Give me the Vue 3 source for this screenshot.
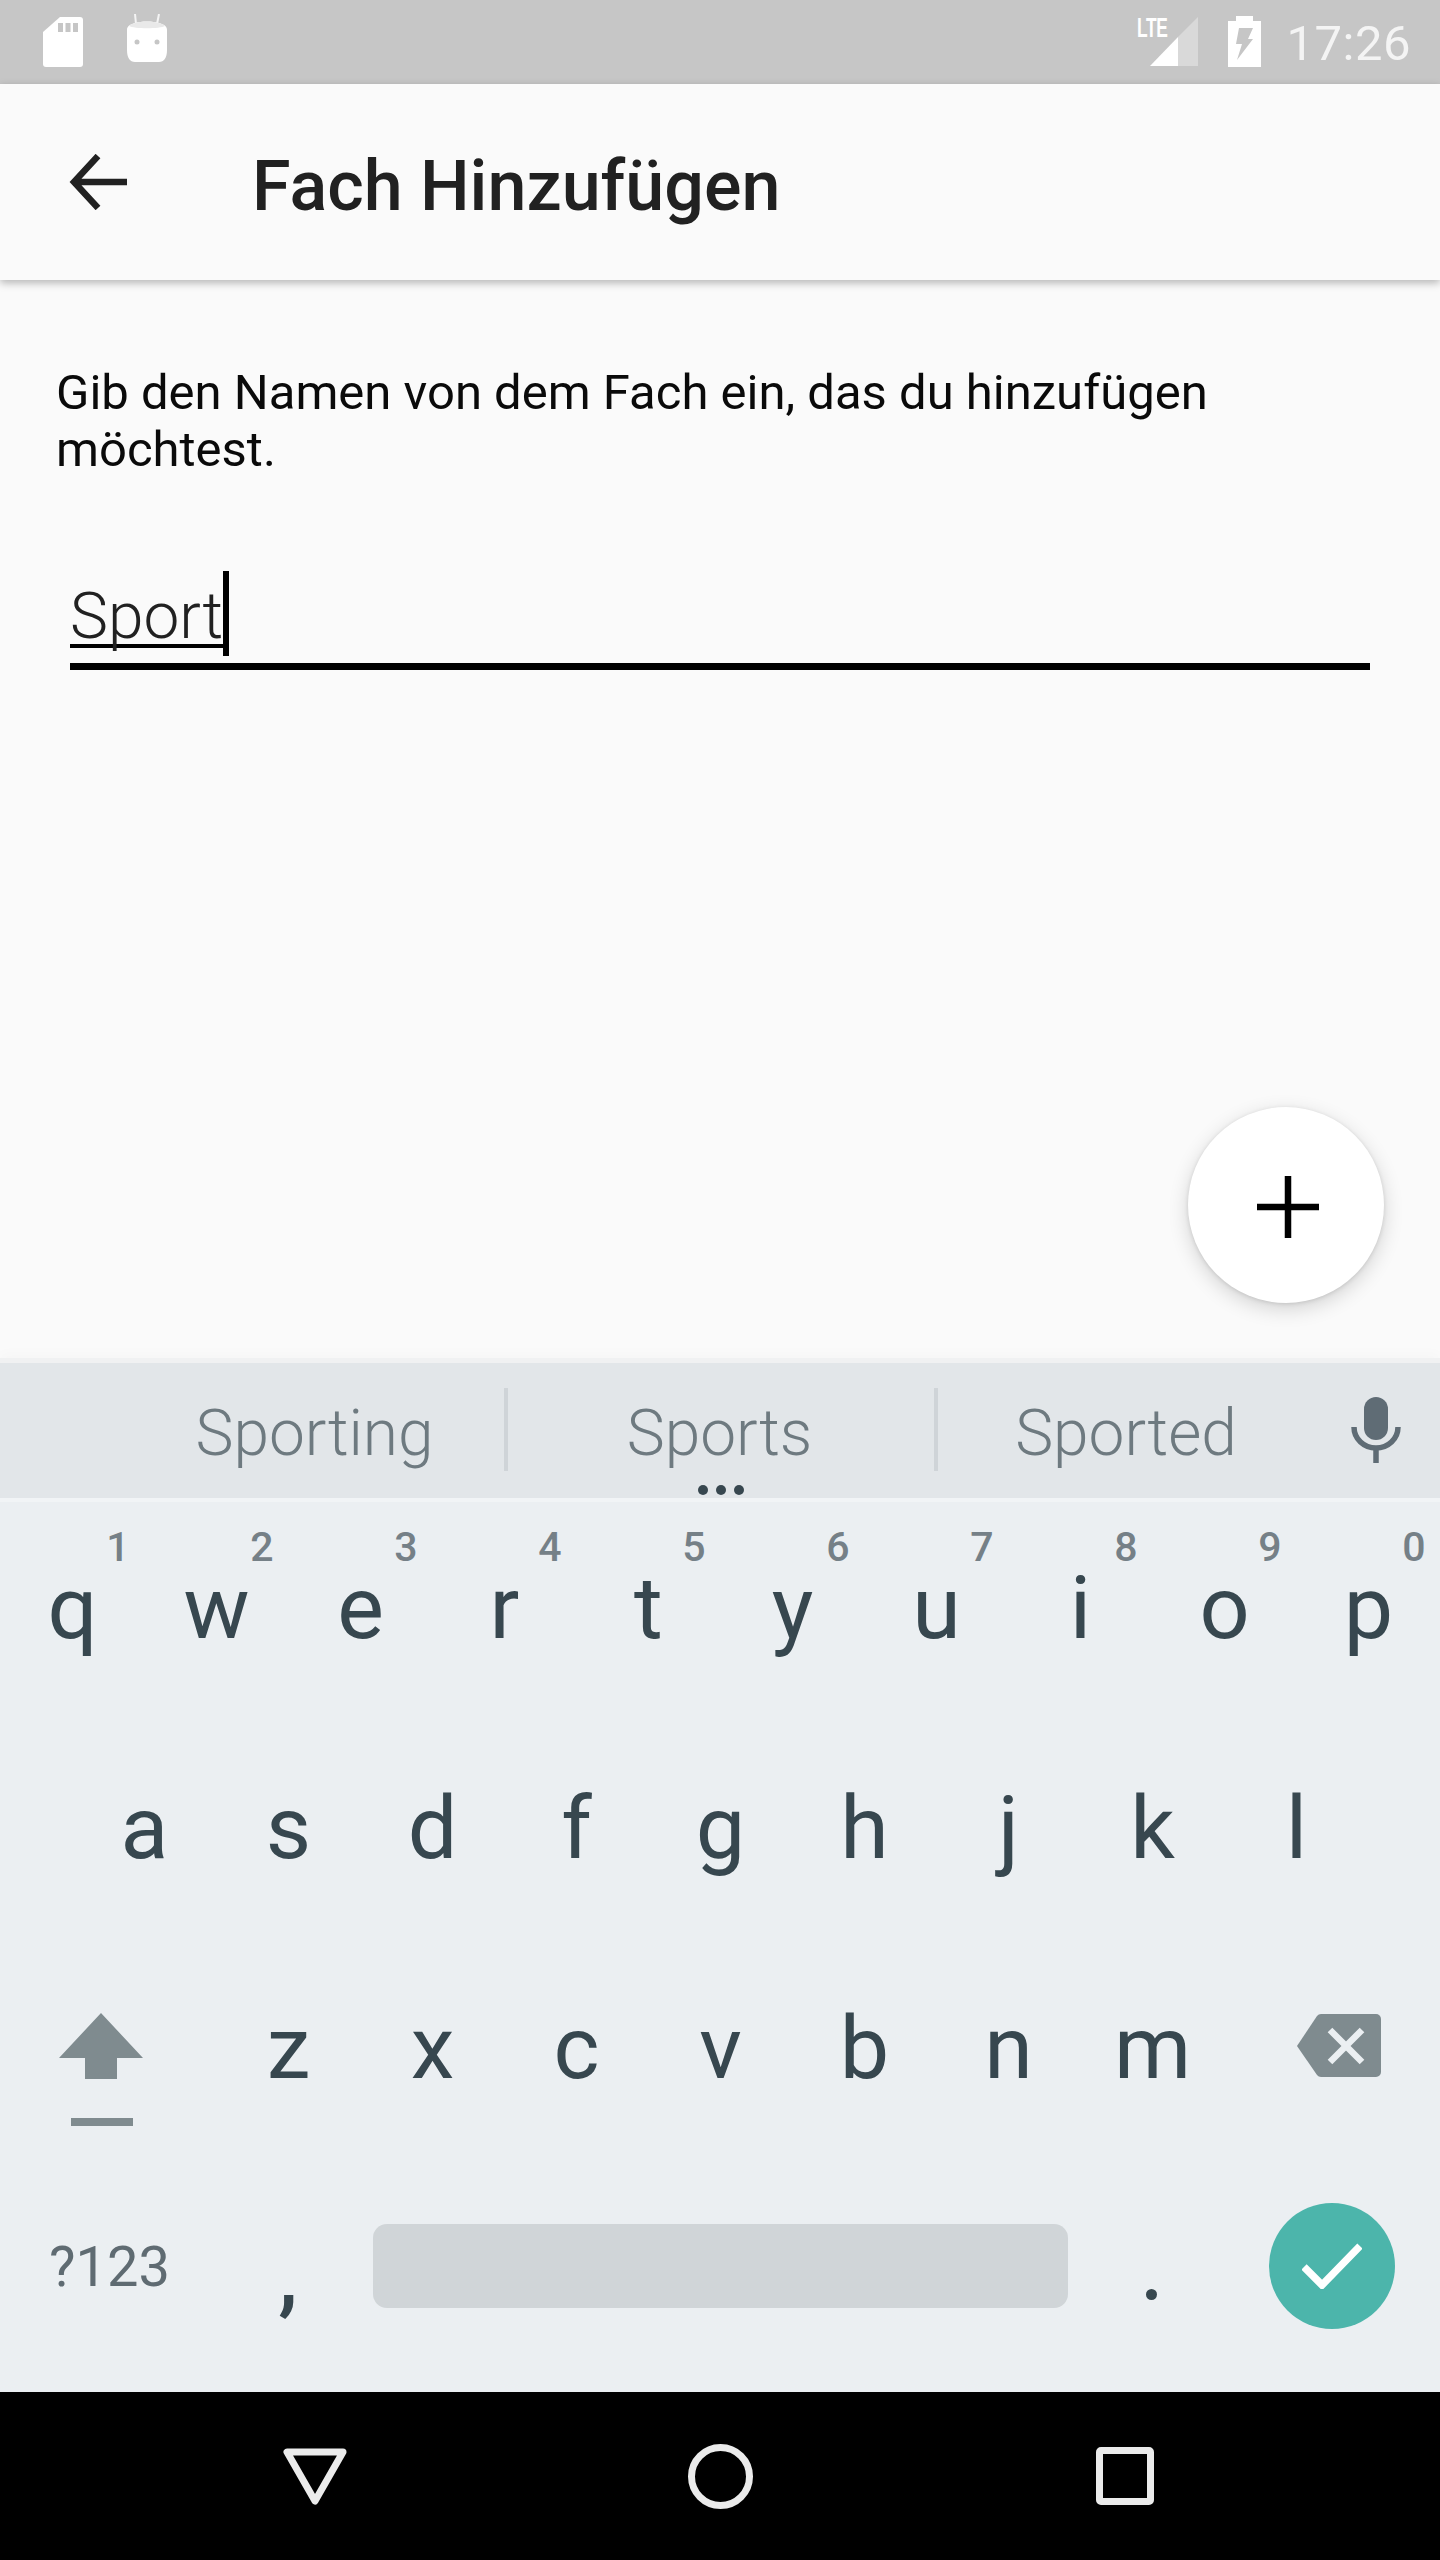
<script setup>
const row1 = [['q','1'],['w','2'],['e','3'],['r','4'],['t','5'],['y','6'],['u','7'],['i','8'],['o','9'],['p','0']]
const row2 = ['a','s','d','f','g','h','j','k','l']
const row3 = ['z','x','c','v','b','n','m']
</script>

<template>
  <div class="phone">
    <div class="status">
      <div class="status-left">
        <svg class="sd" width="40" height="50" viewBox="0 0 40 50">
          <path fill="#fff" d="M17 0H37a3 3 0 0 1 3 3V47a3 3 0 0 1-3 3H3a3 3 0 0 1-3-3V15z" />
          <path fill="#c6c6c6" d="M15 6h5v9h-5zM22.500 6h5v9h-5zM30 6h5v9h-5z" />
        </svg>
        <svg class="droid" width="40" height="50" viewBox="0 0 40 50">
          <path stroke="#f4f4f4" stroke-width="2" fill="none" d="M9 10 8 0M30 10 32 0" />
          <path fill="#fff" d="M8 9C14 7 26 7 32 9c5 1.500 8 3 8 7V36c0 8-3 12-8 12H8c-5 0-8-4-8-12V16c0-4 3-5.500 8-7z" />
          <path fill="#e9e9e9" d="M8 9C14 7 26 7 32 9c3 1 5 2 6 3-5 3-31 3-36 0 1-1 3-2 6-3z" />
          <circle cx="10" cy="28" r="2.500" fill="#c6c6c6" />
          <circle cx="30" cy="28" r="2.500" fill="#c6c6c6" />
        </svg>
      </div>
      <div class="status-right">
        <div class="signal">
          <span class="lte">LTE</span>
          <svg width="48" height="49" viewBox="0 0 48 49">
            <path fill="#d9d9d9" d="M48 0V49H28V20z" />
            <path fill="#fff" d="M28 20V49H0z" />
          </svg>
        </div>
        <svg class="battery" width="33" height="51" viewBox="0 0 33 51">
          <path fill="#fff" d="M8 0H25V5H33V51H0V5H8z" />
          <path fill="#c6c6c6" d="M11 12H25L20 23H25L9 44 14 28H8z" />
        </svg>
        <span class="time">17:26</span>
      </div>
    </div>

    <header class="appbar">
      <svg class="back" width="58" height="56" viewBox="0 0 58 56">
        <path fill="none" stroke="#212121" stroke-width="6.500" d="M58 28H5M29 2 5 28 29 54" />
      </svg>
      <h1 class="title">Fach Hinzufügen</h1>
    </header>

    <main class="content">
      <p class="prompt">Gib den Namen von dem Fach ein, das du hinzufügen möchtest.</p>
      <div class="field">
        <span class="typed">Sport</span><span class="caret"></span>
      </div>
      <button class="fab" aria-label="Hinzufügen">
        <svg width="62" height="62" viewBox="0 0 62 62">
          <path fill="none" stroke="#000" stroke-width="6.500" d="M31 0V62M0 31H62" />
        </svg>
      </button>
    </main>

    <section class="keyboard">
      <div class="suggestions">
        <div class="sugg sugg-first">Sporting</div>
        <i class="divider"></i>
        <div class="sugg sugg-mid">
          Sports
          <span class="dots"><b></b><b></b><b></b></span>
        </div>
        <i class="divider"></i>
        <div class="sugg sugg-last">Sported</div>
        <svg class="mic" width="50" height="66" viewBox="0 0 50 66">
          <rect x="13" y="0" width="24" height="43" rx="12" fill="#5f6c75" />
          <path fill="none" stroke="#5f6c75" stroke-width="5.500" d="M3 30c0 12 10 21 22 21s22-9 22-21M25 50V66" />
        </svg>
      </div>
      <div class="rule"></div>
      <div class="keys">
        <div class="row">
          <div v-for="k in row1" :key="k[0]" class="key">
            {{ k[0] }}<span class="digit">{{ k[1] }}</span>
          </div>
        </div>
        <div class="row row-inset">
          <div v-for="k in row2" :key="k" class="key">{{ k }}</div>
        </div>
        <div class="row">
          <div class="key key-wide">
            <svg class="shift" width="84" height="113" viewBox="0 0 84 113">
              <path fill="#7f8b8f" d="M42 0 84 45H58V66H26V45H0z" />
              <rect x="12" y="105" width="62" height="8" fill="#7f8b8f" />
            </svg>
          </div>
          <div v-for="k in row3" :key="k" class="key">{{ k }}</div>
          <div class="key key-wide">
            <svg class="backspace" width="84" height="63" viewBox="0 0 84 63">
              <path fill="#7f8b8f" d="M24 0H79a5 5 0 0 1 5 5V58a5 5 0 0 1-5 5H24a5 5 0 0 1-4-2L0 32 20 2a5 5 0 0 1 4-2z" />
              <path fill="none" stroke="#ebeff2" stroke-width="6.500" d="M33 16 65 48M65 16 33 48" />
            </svg>
          </div>
        </div>
        <div class="row row-last">
          <div class="fn">?123</div>
          <div class="punct comma">,</div>
          <div class="space-wrap"><div class="space"></div></div>
          <div class="punct period"><i></i></div>
          <div class="enter-wrap">
            <div class="enter">
              <svg width="60" height="46" viewBox="0 0 60 46">
                <path fill="none" stroke="#fff" stroke-width="7.500" d="M2 24 20 42 58 3" />
              </svg>
            </div>
          </div>
        </div>
      </div>
    </section>

    <nav class="navbar">
      <svg width="64" height="57" viewBox="0 0 64 57">
        <path fill="none" stroke="#ebebeb" stroke-width="7" stroke-linejoin="round" d="M4 4H60L32 53z" />
      </svg>
      <svg width="65" height="65" viewBox="0 0 65 65">
        <circle cx="32.500" cy="32.500" r="29" fill="none" stroke="#ebebeb" stroke-width="7" />
      </svg>
      <svg width="58" height="58" viewBox="0 0 58 58">
        <rect x="3.500" y="3.500" width="51" height="51" rx="1.500" fill="none" stroke="#ebebeb" stroke-width="7" />
      </svg>
    </nav>
  </div>
</template>

<style>
html, body { margin: 0; padding: 0; }
</style>

<style scoped>
.phone {
  width: 1440px;
  height: 2560px;
  display: flex;
  flex-direction: column;
  overflow: hidden;
  background: #fafafa;
  font-family: Roboto, "Liberation Sans", sans-serif;
}

.status {
  height: 84px;
  flex: none;
  background: #c6c6c6;
  display: flex;
  justify-content: space-between;
  align-items: flex-start;
  position: relative;
  z-index: 1;
}
.status-left {
  display: flex;
  gap: 44px;
  padding: 15px 0 0 43px;
}
.sd { margin-top: 2px; }
.droid { margin-top: -1px; }
.status-right {
  display: flex;
  align-items: flex-start;
  padding: 16px 29px 0 0;
}
.signal {
  position: relative;
  width: 61px;
  height: 50px;
  display: flex;
  justify-content: flex-end;
  padding-top: 1px;
}
.lte {
  position: absolute;
  left: 0;
  top: 0;
  font-family: "Liberation Sans", sans-serif;
  font-weight: 700;
  font-size: 28px;
  line-height: 24px;
  color: #fff;
  transform: scaleX(0.62);
  transform-origin: left top;
  letter-spacing: -0.5px;
}
.battery { margin-left: 30px; }
.time {
  margin-left: 25px;
  font-size: 49px;
  line-height: 56px;
  color: #f4f4f4;
  letter-spacing: 0.5px;
}

.appbar {
  height: 196px;
  flex: none;
  box-sizing: border-box;
  background: #fafafa;
  display: flex;
  align-items: center;
  padding-left: 69px;
  box-shadow: 0 3px 8px rgba(0, 0, 0, 0.28);
  position: relative;
  z-index: 1;
}
.back { flex: none; }
.title {
  margin: 8px 0 0 125px;
  font-size: 70px;
  font-weight: 500;
  line-height: 80px;
  color: #212121;
}

.content {
  flex: 1;
  position: relative;
  min-height: 0;
  box-sizing: border-box;
  padding: 84px 70px 0 56px;
}
.prompt {
  margin: 0;
  width: 1200px;
  font-size: 49px;
  line-height: 57px;
  color: #0a0a0a;
}
.field {
  margin: 84px 0 0 14px;
  height: 108px;
  box-sizing: border-box;
  border-bottom: 7px solid #000;
  position: relative;
  display: flex;
  align-items: flex-start;
}
.typed {
  font-size: 64px;
  font-weight: 350;
  line-height: 72px;
  margin-top: 19px;
  color: #212121;
  box-shadow: inset 0 -4px 0 #000;
  height: 67px;
}
.caret {
  width: 6px;
  height: 85px;
  margin-top: 9px;
  background: #000;
}
.fab {
  position: absolute;
  left: 1188px;
  top: 827px;
  width: 196px;
  height: 196px;
  padding: 0;
  border: 0;
  border-radius: 50%;
  background: #fff;
  box-shadow: 0 6px 20px rgba(0, 0, 0, 0.16), 0 1px 4px rgba(0, 0, 0, 0.12);
  display: flex;
  align-items: center;
  justify-content: center;
}
.fab svg { margin: 3px 0 0 3px; }

.keyboard {
  flex: none;
  height: 1034px;
  display: flex;
  flex-direction: column;
  background: #ebeff2;
  border-top: 5px solid #f0f1f2;
  box-sizing: border-box;
  position: relative;
  box-shadow: 0 -6px 10px rgba(0, 0, 0, 0.015);
}
.suggestions {
  height: 135px;
  flex: none;
  background: #e2e6e9;
  display: flex;
  align-items: center;
  position: relative;
  color: #6e7a80;
  font-size: 64px;
  font-weight: 350;
}
.sugg {
  height: 135px;
  line-height: 141px;
  text-align: center;
  position: relative;
  box-sizing: border-box;
}
.sugg-first { width: 504px; padding-left: 125px; }
.sugg-mid { width: 426px; padding-right: 3px; }
.sugg-last { width: 386px; padding-right: 10px; }
.divider {
  width: 4px;
  height: 83px;
  flex: none;
  margin-top: -3px;
  background: #cfd4d8;
}
.dots {
  position: absolute;
  left: 50%;
  bottom: 3px;
  transform: translateX(-50%);
  display: flex;
  gap: 8px;
}
.dots b {
  width: 10px;
  height: 10px;
  border-radius: 50%;
  background: #37474f;
}
.mic {
  position: absolute;
  left: 1351px;
  top: 34px;
}
.rule { height: 4px; flex: none; background: #f1f4f6; }

.keys { flex: 1; display: flex; flex-direction: column; }
.row {
  height: 220px;
  flex: none;
  display: flex;
  color: #37474f;
}
.row-inset { padding-left: 72px; }
.key {
  width: 144px;
  flex: none;
  position: relative;
  text-align: center;
  text-indent: 1px;
  font-size: 88px;
  line-height: 211px;
}
.key-wide { width: 216px; }
.digit {
  position: absolute;
  left: 98px;
  top: 21px;
  width: 40px;
  text-align: center;
  text-indent: 0;
  font-size: 41px;
  font-weight: 500;
  line-height: 48px;
  color: #758087;
}
.shift { position: absolute; left: 59px; top: 71px; }
.backspace { position: absolute; left: 73px; top: 72px; }

.row-last { height: 230px; }
.fn {
  width: 216px;
  flex: none;
  box-sizing: border-box;
  padding-left: 49px;
  font-size: 56px;
  line-height: 210px;
  color: #5f6b72;
}
.punct { width: 144px; flex: none; position: relative; }
.comma {
  text-align: center;
  font-size: 88px;
  font-weight: 500;
  line-height: 226px;
}
.period i {
  position: absolute;
  left: 66px;
  top: 127px;
  width: 11px;
  height: 11px;
  border-radius: 50%;
  background: #37474f;
}
.space-wrap {
  width: 720px;
  flex: none;
  box-sizing: border-box;
  padding: 62px 12px 0 13px;
}
.space {
  height: 84px;
  border-radius: 14px;
  background: #d0d5d8;
}
.enter-wrap { width: 216px; flex: none; padding: 41px 0 0 45px; box-sizing: border-box; }
.enter {
  width: 126px;
  height: 126px;
  border-radius: 50%;
  background: #4cb5ab;
  display: flex;
  align-items: center;
  justify-content: center;
}

.navbar {
  height: 168px;
  flex: none;
  background: #000;
  display: grid;
  grid-template-columns: 630px 180px 630px;
  justify-items: center;
  align-items: center;
  position: relative;
}
</style>
